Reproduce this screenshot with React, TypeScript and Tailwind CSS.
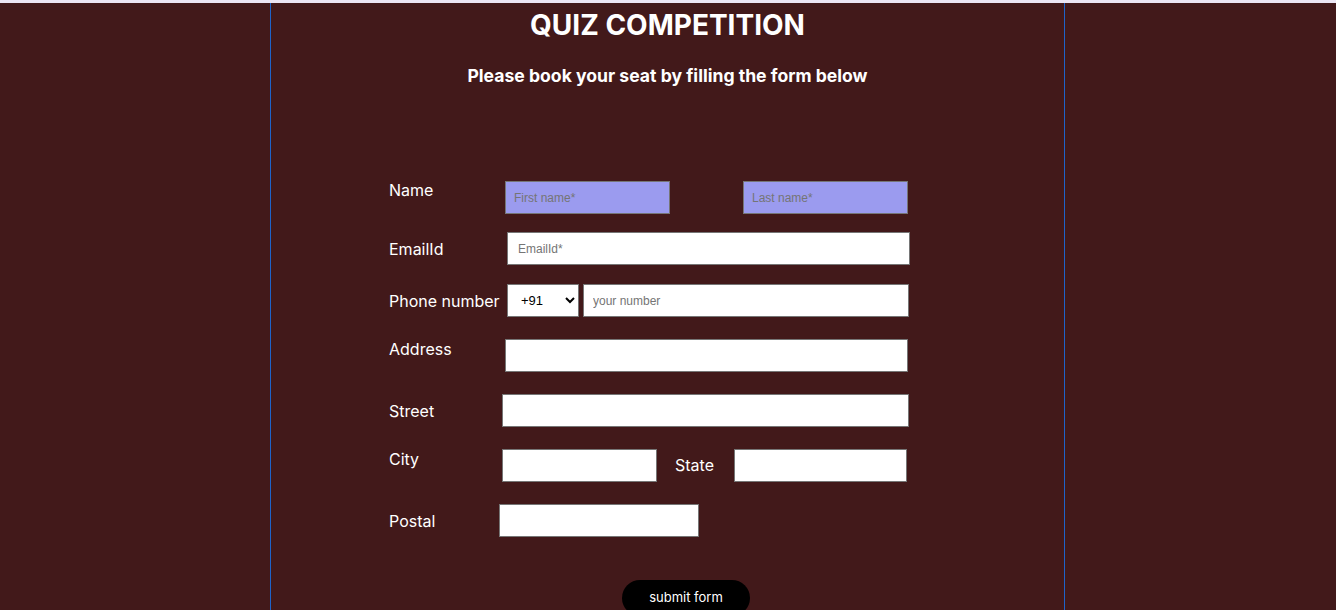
export default function App() {
  const label = "text-white text-[16px] leading-[22px] w-[110px] shrink-0 whitespace-nowrap";
  const input =
    "h-[33px] bg-white border border-[#767676] text-[12px] text-black placeholder:text-[#757575] outline-none";
  const arial = { fontFamily: "'Liberation Sans', Arial, sans-serif" };
  return (
    <div className="min-h-screen bg-[#42191a]" style={{ fontFamily: "Inter, 'Noto Sans', sans-serif" }}>
      <div className="h-[3px] bg-[#ece6f4]" />
      <div className="ml-[270px] w-[795px] min-h-[607px] border-l border-r border-l-[#1f63c9] border-r-[#1f63c9] pt-[6px]">
        <h1 className="text-center text-white font-bold text-[28px] leading-[32px]">QUIZ COMPETITION</h1>
        <h3 className="mt-[24px] text-center text-white font-bold text-[17.6px] leading-[22px]">
          Please book your seat by filling the form below
        </h3>

        <form className="pl-[118px] pt-[94px] flex flex-col">
          {/* Name */}
          <div className="flex items-start">
            <label className={label + " mt-[-2px]"}>Name</label>
            <input
              placeholder="First name*"
              className={input + " ml-[6px] w-[165px] pl-[8px]"}
              style={{ ...arial, background: "#9b9bef" }}
            />
            <input
              placeholder="Last name*"
              className={input + " ml-[73px] w-[165px] pl-[8px]"}
              style={{ ...arial, background: "#9b9bef" }}
            />
          </div>

          {/* Email */}
          <div className="flex items-center mt-[18px]">
            <label className={label}>EmailId</label>
            <input placeholder="EmailId*" className={input + " ml-[8px] w-[403px] pl-[10px]"} style={arial} />
          </div>

          {/* Phone */}
          <div className="flex items-center mt-[19px]">
            <label className={label}>Phone number</label>
            <select
              className="ml-[8px] h-[33px] w-[72px] bg-white border border-[#767676] text-[13px] text-black pl-[9px]"
              style={arial}
              defaultValue="+91"
            >
              <option>+91</option>
            </select>
            <input placeholder="your number" className={input + " ml-[4px] w-[326px] pl-[9px]"} style={arial} />
          </div>

          {/* Address */}
          <div className="flex items-start mt-[22px]">
            <label className={label + " mt-[-1px]"}>Address</label>
            <input className={input + " ml-[6px] w-[403px]"} />
          </div>

          {/* Street */}
          <div className="flex items-center mt-[22px]">
            <label className={label}>Street</label>
            <input className={input + " ml-[3px] w-[407px]"} />
          </div>

          {/* City / State */}
          <div className="flex items-start mt-[22px]">
            <label className={label + " mt-[-1px]"}>City</label>
            <input className={input + " ml-[3px] w-[155px]"} />
            <label className="text-white text-[16px] leading-[22px] ml-[18px] mt-[5px] w-[59px]">State</label>
            <input className={input + " w-[173px]"} />
          </div>

          {/* Postal */}
          <div className="flex items-center mt-[22px]">
            <label className={label}>Postal</label>
            <input className={input + " w-[200px]"} />
          </div>

          <div className="mt-[43px]">
            <button
              type="button"
              className="ml-[233px] w-[128px] h-[36px] rounded-full bg-black text-white text-[13px]"
            >
              submit form
            </button>
          </div>
        </form>
      </div>
    </div>
  );
}
